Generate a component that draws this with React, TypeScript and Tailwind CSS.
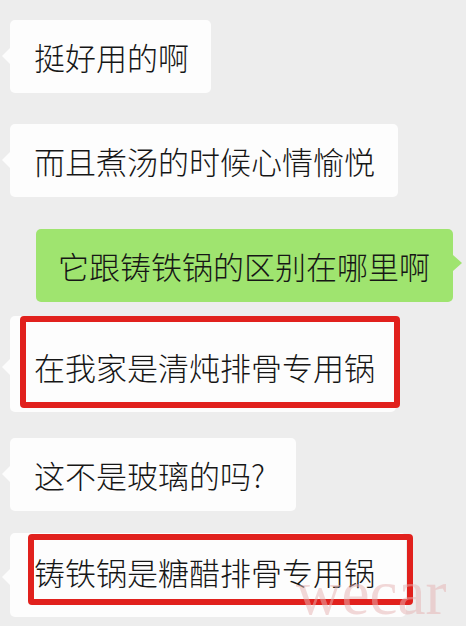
import React from "react";

const FONT = { fontFamily: '"Noto Sans CJK SC", "Noto Sans", sans-serif' };

function LeftBubble({
  children,
  className,
  tailTop,
}: {
  children: React.ReactNode;
  className: string;
  tailTop: string;
}) {
  return (
    <div className={`relative ml-[10px] shrink-0 ${className}`}>
      <div
        className={`absolute left-[-8px] ${tailTop} w-0 h-0 border-y-[8px] border-y-transparent border-r-[8px] border-r-[#fdfdfd]`}
      />
      <div className="flex h-full w-full items-center rounded-[5px] bg-[#fdfdfd] pl-[24px] text-[31px] font-light leading-none text-[#161616]">
        {children}
      </div>
    </div>
  );
}

export default function App() {
  return (
    <div
      className="relative flex h-[626px] w-[466px] flex-col overflow-hidden bg-[#ededed]"
      style={FONT}
    >
      <LeftBubble className="mt-[20px] h-[73px] w-[201px]" tailTop="top-[28px]">
        挺好用的啊
      </LeftBubble>

      <LeftBubble className="mt-[31px] h-[73px] w-[388px]" tailTop="top-[28px]">
        而且煮汤的时候心情愉悦
      </LeftBubble>

      <div className="relative ml-[36px] mt-[32px] h-[73px] w-[417px] shrink-0">
        <div className="absolute right-[-9px] top-[26px] h-0 w-0 border-y-[8px] border-l-[9px] border-y-transparent border-l-[#9fe46f]" />
        <div className="flex h-full w-full items-center rounded-[5px] bg-[#9fe46f] pl-[22px] text-[31px] font-light leading-none text-[#161616]">
          它跟铸铁锅的区别在哪里啊
        </div>
      </div>

      <LeftBubble className="mt-[14px] h-[96px] w-[386px]" tailTop="top-[43px]">
        <span className="pt-[4px]">在我家是清炖排骨专用锅</span>
      </LeftBubble>
      <div className="pointer-events-none absolute left-[20px] top-[316px] h-[92px] w-[380px] rounded-[4px] border-[6px] border-[#e1211d]" />

      <LeftBubble className="mt-[26px] h-[73px] w-[286px]" tailTop="top-[28px]">
        这不是玻璃的吗?
      </LeftBubble>

      <LeftBubble className="mt-[22px] h-[84px] w-[396px]" tailTop="top-[36px]">
        <span className="pb-[8px]">铸铁锅是糖醋排骨专用锅</span>
      </LeftBubble>
      <div className="pointer-events-none absolute left-[28px] top-[534px] h-[71px] w-[385px] rounded-[4px] border-[6px] border-[#e1211d]" />

      <div
        className="pointer-events-none absolute left-[296px] top-[562px] text-[63px] leading-none text-[#e7b3b3] opacity-50"
        style={{ fontFamily: '"Liberation Serif", serif' }}
      >
        wecar
      </div>
    </div>
  );
}
